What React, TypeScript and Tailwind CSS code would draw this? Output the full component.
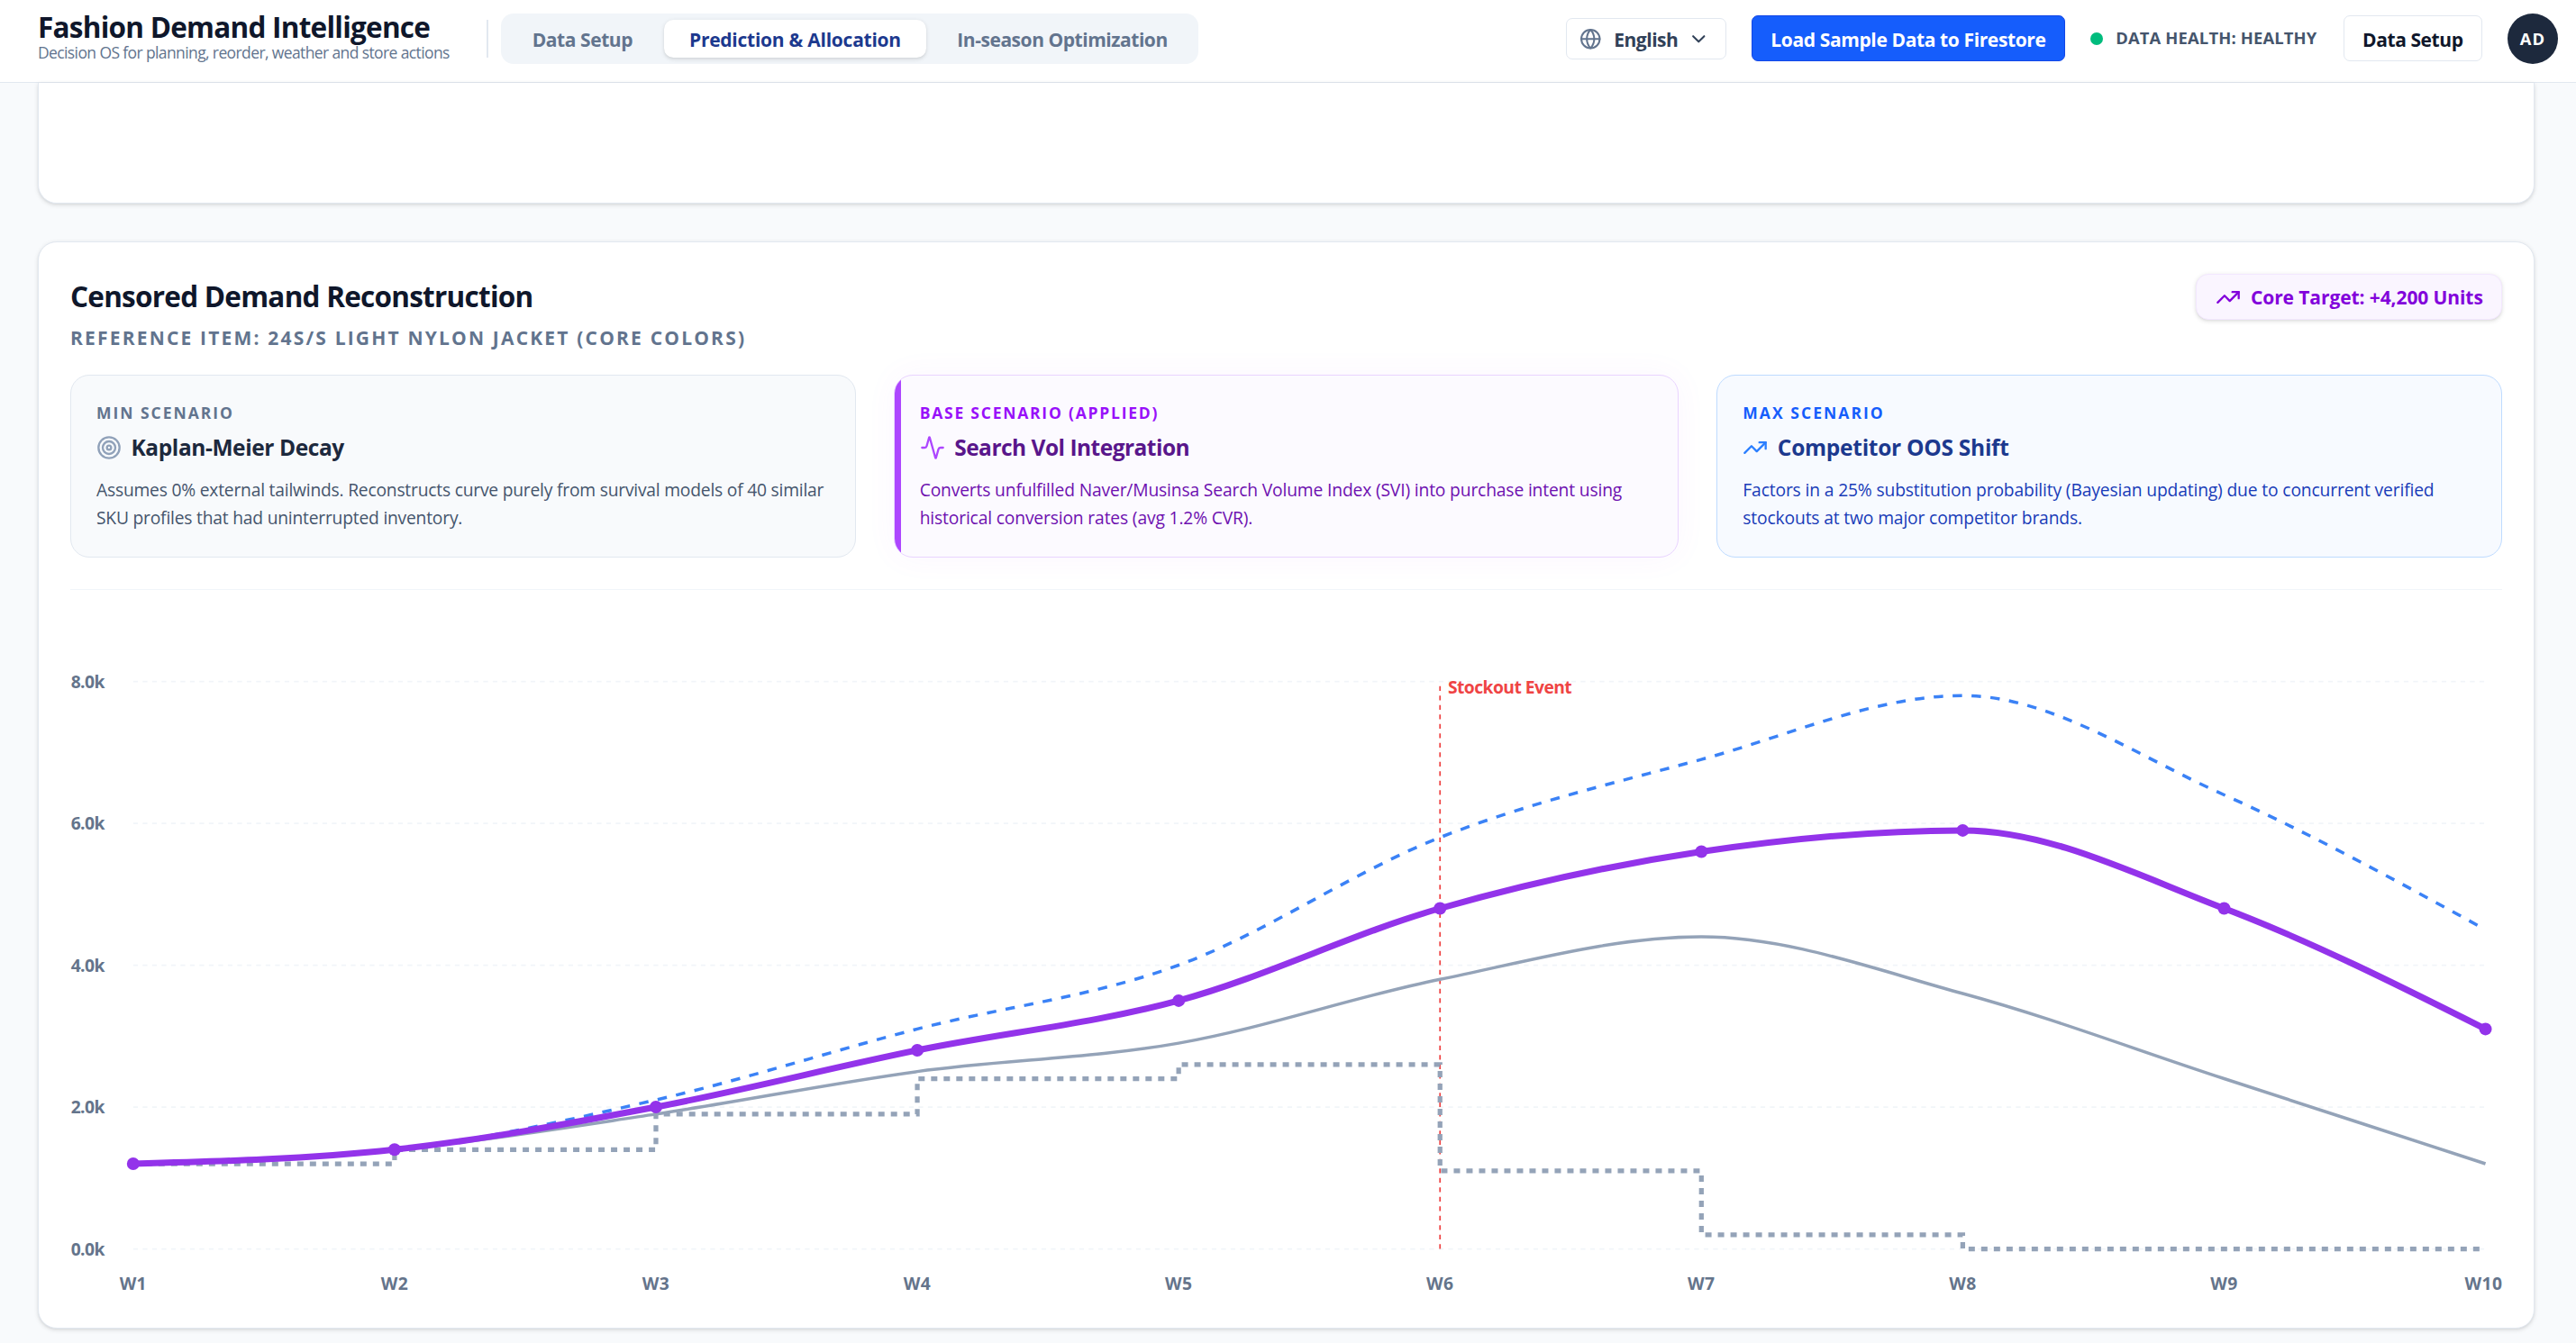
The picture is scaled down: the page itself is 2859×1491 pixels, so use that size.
import { Activity, ChevronDown, Globe, Target, TrendingUp } from "lucide-react";
import clsx from "clsx";

const weeks = ["W1", "W2", "W3", "W4", "W5", "W6", "W7", "W8", "W9", "W10"];
const actual = [1200, 1400, 1900, 2400, 2600, 1100, 200, 0, 0, 0];
const minCase = [1200, 1400, 1900, 2500, 2900, 3800, 4400, 3600, 2400, 1200];
const baseCase = [1200, 1400, 2000, 2800, 3500, 4800, 5600, 5900, 4800, 3100];
const maxCase = [1200, 1400, 2100, 3100, 4000, 5800, 6900, 7800, 6400, 4500];

const LEFT = 39.9;
const STEP = 165.76;
const TOP = 58;
const BOTTOM = 418;

const px = (i: number) => LEFT + i * STEP;
const py = (v: number) => BOTTOM - (v / 8000) * (BOTTOM - TOP);

// monotone cubic interpolation, tangents are clamped so the curve never overshoots
function monotonePath(values: number[]) {
  const pts = values.map((v, i) => [px(i), py(v)]);
  const n = pts.length;
  const slopes = pts.slice(1).map((p, i) => (p[1] - pts[i][1]) / (p[0] - pts[i][0]));
  const t: number[] = new Array(n).fill(0);
  for (let i = 1; i < n - 1; i++) {
    const a = slopes[i - 1];
    const b = slopes[i];
    const p = (a + b) / 2;
    t[i] = (Math.sign(a) + Math.sign(b)) * Math.min(Math.abs(a), Math.abs(b), 0.5 * Math.abs(p)) || 0;
  }
  t[0] = (3 * slopes[0] - t[1]) / 2;
  t[n - 1] = (3 * slopes[n - 2] - t[n - 2]) / 2;

  let d = `M${pts[0][0]},${pts[0][1]}`;
  for (let i = 1; i < n; i++) {
    const [x0, y0] = pts[i - 1];
    const [x1, y1] = pts[i];
    const dx = (x1 - x0) / 3;
    d += `C${x0 + dx},${y0 + dx * t[i - 1]},${x1 - dx},${y1 - dx * t[i]},${x1},${y1}`;
  }
  return d;
}

function stepPath(values: number[]) {
  return values.reduce(
    (d, v, i) => (i === 0 ? `M${px(0)},${py(v)}` : `${d}H${px(i)}V${py(v)}`),
    ""
  );
}

function DemandChart() {
  return (
    <svg width="1542" height="448" className="block overflow-visible">
      {[0, 2000, 4000, 6000, 8000].map((v) => (
        <g key={v}>
          <line x1={px(0)} x2={px(9)} y1={py(v)} y2={py(v)} stroke="#f1f5f9" strokeDasharray="3 3" />
          <text x="21.6" y={py(v) + 4.1} textAnchor="end" className="fill-[#64748b] text-[11px] font-bold tracking-[-0.03em]">
            {(v / 1000).toFixed(1)}k
          </text>
        </g>
      ))}
      {weeks.map((w, i) => (
        <text
          key={w}
          x={i === 9 ? px(i) - 1.2 : px(i)}
          y="443.8"
          textAnchor="middle"
          className="fill-[#64748b] text-[11px] font-bold tracking-[0.02em]"
        >
          {w}
        </text>
      ))}
      <line x1={px(5)} x2={px(5)} y1={BOTTOM} y2={TOP} stroke="#ef4444" strokeDasharray="3 3" />
      <text x={px(5) + 5} y="65.8" className="fill-[#ef4444] text-[11px] font-bold tracking-[-0.028em]">
        Stockout Event
      </text>
      <path d={stepPath(actual)} fill="none" stroke="#94a3b8" strokeWidth="3" strokeDasharray="4 4" />
      <path d={monotonePath(minCase)} fill="none" stroke="#94a3b8" strokeWidth="2" />
      <path d={monotonePath(maxCase)} fill="none" stroke="#3b82f6" strokeWidth="2" strokeDasharray="6 6" />
      <path d={monotonePath(baseCase)} fill="none" stroke="#9333ea" strokeWidth="4" />
      {baseCase.map((v, i) => (
        <circle key={i} cx={px(i)} cy={py(v)} r="4" fill="#9333ea" />
      ))}
    </svg>
  );
}

const scenarios = [
  {
    label: "Min Scenario",
    title: "Kaplan-Meier Decay",
    body: ["Assumes 0% external tailwinds. Reconstructs curve purely from survival models of 40 similar", "SKU profiles that had uninterrupted inventory."],
    icon: Target,
    box: "bg-slate-50 border-slate-200",
    labelClass: "text-slate-500 tracking-[0.113em]",
    iconClass: "text-slate-400",
    titleClass: "text-slate-800 tracking-[-0.017em]",
    bodyClass: "text-slate-600 tracking-[-0.011em]",
  },
  {
    label: "Base Scenario (Applied)",
    title: "Search Vol Integration",
    body: ["Converts unfulfilled Naver/Musinsa Search Volume Index (SVI) into purchase intent using", "historical conversion rates (avg 1.2% CVR)."],
    icon: Activity,
    box: "bg-[#fcfaff] border-purple-200 shadow-[0_0_20px_rgba(168,85,247,0.05)]",
    labelClass: "text-purple-600 tracking-[0.101em]",
    iconClass: "text-purple-500",
    titleClass: "text-purple-900 tracking-[-0.021em]",
    bodyClass: "text-purple-800 tracking-[-0.008em]",
    active: true,
  },
  {
    label: "Max Scenario",
    title: "Competitor OOS Shift",
    body: ["Factors in a 25% substitution probability (Bayesian updating) due to concurrent verified", "stockouts at two major competitor brands."],
    icon: TrendingUp,
    box: "bg-[#f7faff] border-blue-200",
    labelClass: "text-blue-600 tracking-[0.117em]",
    iconClass: "text-blue-500",
    titleClass: "text-blue-900 tracking-[-0.011em]",
    bodyClass: "text-blue-800 tracking-[-0.0075em]",
  },
];

function ScenarioCard({ s }: { s: (typeof scenarios)[number] }) {
  const Icon = s.icon;
  return (
    <div className={clsx("relative h-[116px] flex-1 overflow-hidden rounded-xl border p-4", s.box)}>
      {s.active && <div className="absolute inset-y-0 left-0 w-1 bg-purple-500" />}
      <div className={clsx("text-[10px] leading-[15px] font-bold uppercase", s.labelClass)}>{s.label}</div>
      <div className="mt-[4.4px] flex items-center gap-1.5">
        <Icon size={16} className={s.iconClass} />
        <h3 className={clsx("text-sm leading-5 font-bold", s.titleClass)}>{s.title}</h3>
      </div>
      <p className={clsx("mt-2 text-[11px] leading-[17.875px] whitespace-nowrap", s.bodyClass)}>
        {s.body[0]}
        <br />
        {s.body[1]}
      </p>
    </div>
  );
}

function Header() {
  return (
    <header className="flex h-[52.6px] shrink-0 items-center justify-between border-b border-slate-200 bg-white pr-[11.4px] pb-[3px] pl-6">
      <div className="flex items-center">
        <div className="w-[284.6px] pb-px whitespace-nowrap">
          <h1 className="text-lg leading-[18px] font-bold tracking-[-0.024em] text-slate-900">Fashion Demand Intelligence</h1>
          <p className="text-[10px] leading-[14px] tracking-[-0.035em] text-slate-500">
            Decision OS for planning, reorder, weather and store actions
          </p>
        </div>
        <div className="h-6 w-px bg-slate-200" />
        <nav className="ml-2 flex h-8 items-center gap-1 rounded-lg bg-slate-100 p-1 text-xs font-bold text-slate-500">
          <button className="h-6 w-[95.5px] pt-px tracking-[-0.02em]">Data Setup</button>
          <button className="h-6 w-[166.3px] rounded-md bg-white pt-px tracking-[-0.012em] text-blue-900 shadow-sm">
            Prediction &amp; Allocation
          </button>
          <button className="h-6 w-[164.7px] pt-px tracking-[-0.022em]">In-season Optimization</button>
        </nav>
      </div>
      <div className="flex items-center gap-4 text-xs font-bold whitespace-nowrap">
        <button className="flex h-[26.3px] w-[101.7px] items-center rounded border border-slate-200 bg-white pl-2 text-slate-700">
          <Globe size={14} className="text-slate-500" />
          <span className="ml-2 w-[47px] pt-px text-left tracking-[-0.022em]">English</span>
          <ChevronDown size={14} />
        </button>
        <button className="h-[29.1px] w-[199.2px] rounded border border-blue-700 bg-blue-600 pt-px tracking-[-0.018em] text-white">
          Load Sample Data to Firestore
        </button>
        <div className="flex w-[144.2px] items-center gap-2">
          <span className="size-2 rounded-full bg-emerald-500" />
          <span className="pb-px text-[10.5px] tracking-[0.009em] text-slate-600">DATA HEALTH: HEALTHY</span>
        </div>
        <button className="h-[29.1px] w-[88.3px] rounded border border-slate-200 bg-white pt-px tracking-[-0.02em] text-slate-900">
          Data Setup
        </button>
        <div className="flex size-8 items-center justify-center rounded-full bg-slate-800 text-[10.5px] tracking-[0.06em] text-white">
          AD
        </div>
      </div>
    </header>
  );
}

export default function App() {
  return (
    <div className="flex h-[852px] flex-col overflow-hidden bg-slate-50 font-['Open_Sans',sans-serif] [zoom:1.75]">
      <Header />
      <main className="flex flex-col gap-6 pr-[26.3px] pl-6">
        <section className="h-[76.6px] rounded-b-xl border border-t-0 border-slate-200 bg-white shadow-sm" />
        <section className="rounded-xl border border-slate-200 bg-white p-5 shadow-sm">
          <div className="flex h-12 items-start justify-between">
            <div>
              <h2 className="text-lg leading-7 font-bold tracking-[-0.024em] text-slate-900">Censored Demand Reconstruction</h2>
              <p className="mt-[4.6px] text-xs leading-4 font-bold tracking-[0.104em] text-slate-500 uppercase">
                Reference item: 24S/S Light Nylon Jacket (Core Colors)
              </p>
            </div>
            <div className="flex h-[29.1px] w-[194px] items-center gap-1.5 rounded-lg border border-purple-100 bg-purple-50 pl-3 text-xs font-bold tracking-[-0.0045em] whitespace-nowrap text-purple-700 shadow-sm">
              <TrendingUp size={16} />
              <span className="pt-px">Core Target: +4,200 Units</span>
            </div>
          </div>
          <div className="mt-4 flex gap-6">
            {scenarios.map((s) => (
              <ScenarioCard key={s.label} s={s} />
            ))}
          </div>
          <div className="mt-5 border-t border-slate-100">
            <DemandChart />
          </div>
        </section>
      </main>
    </div>
  );
}
